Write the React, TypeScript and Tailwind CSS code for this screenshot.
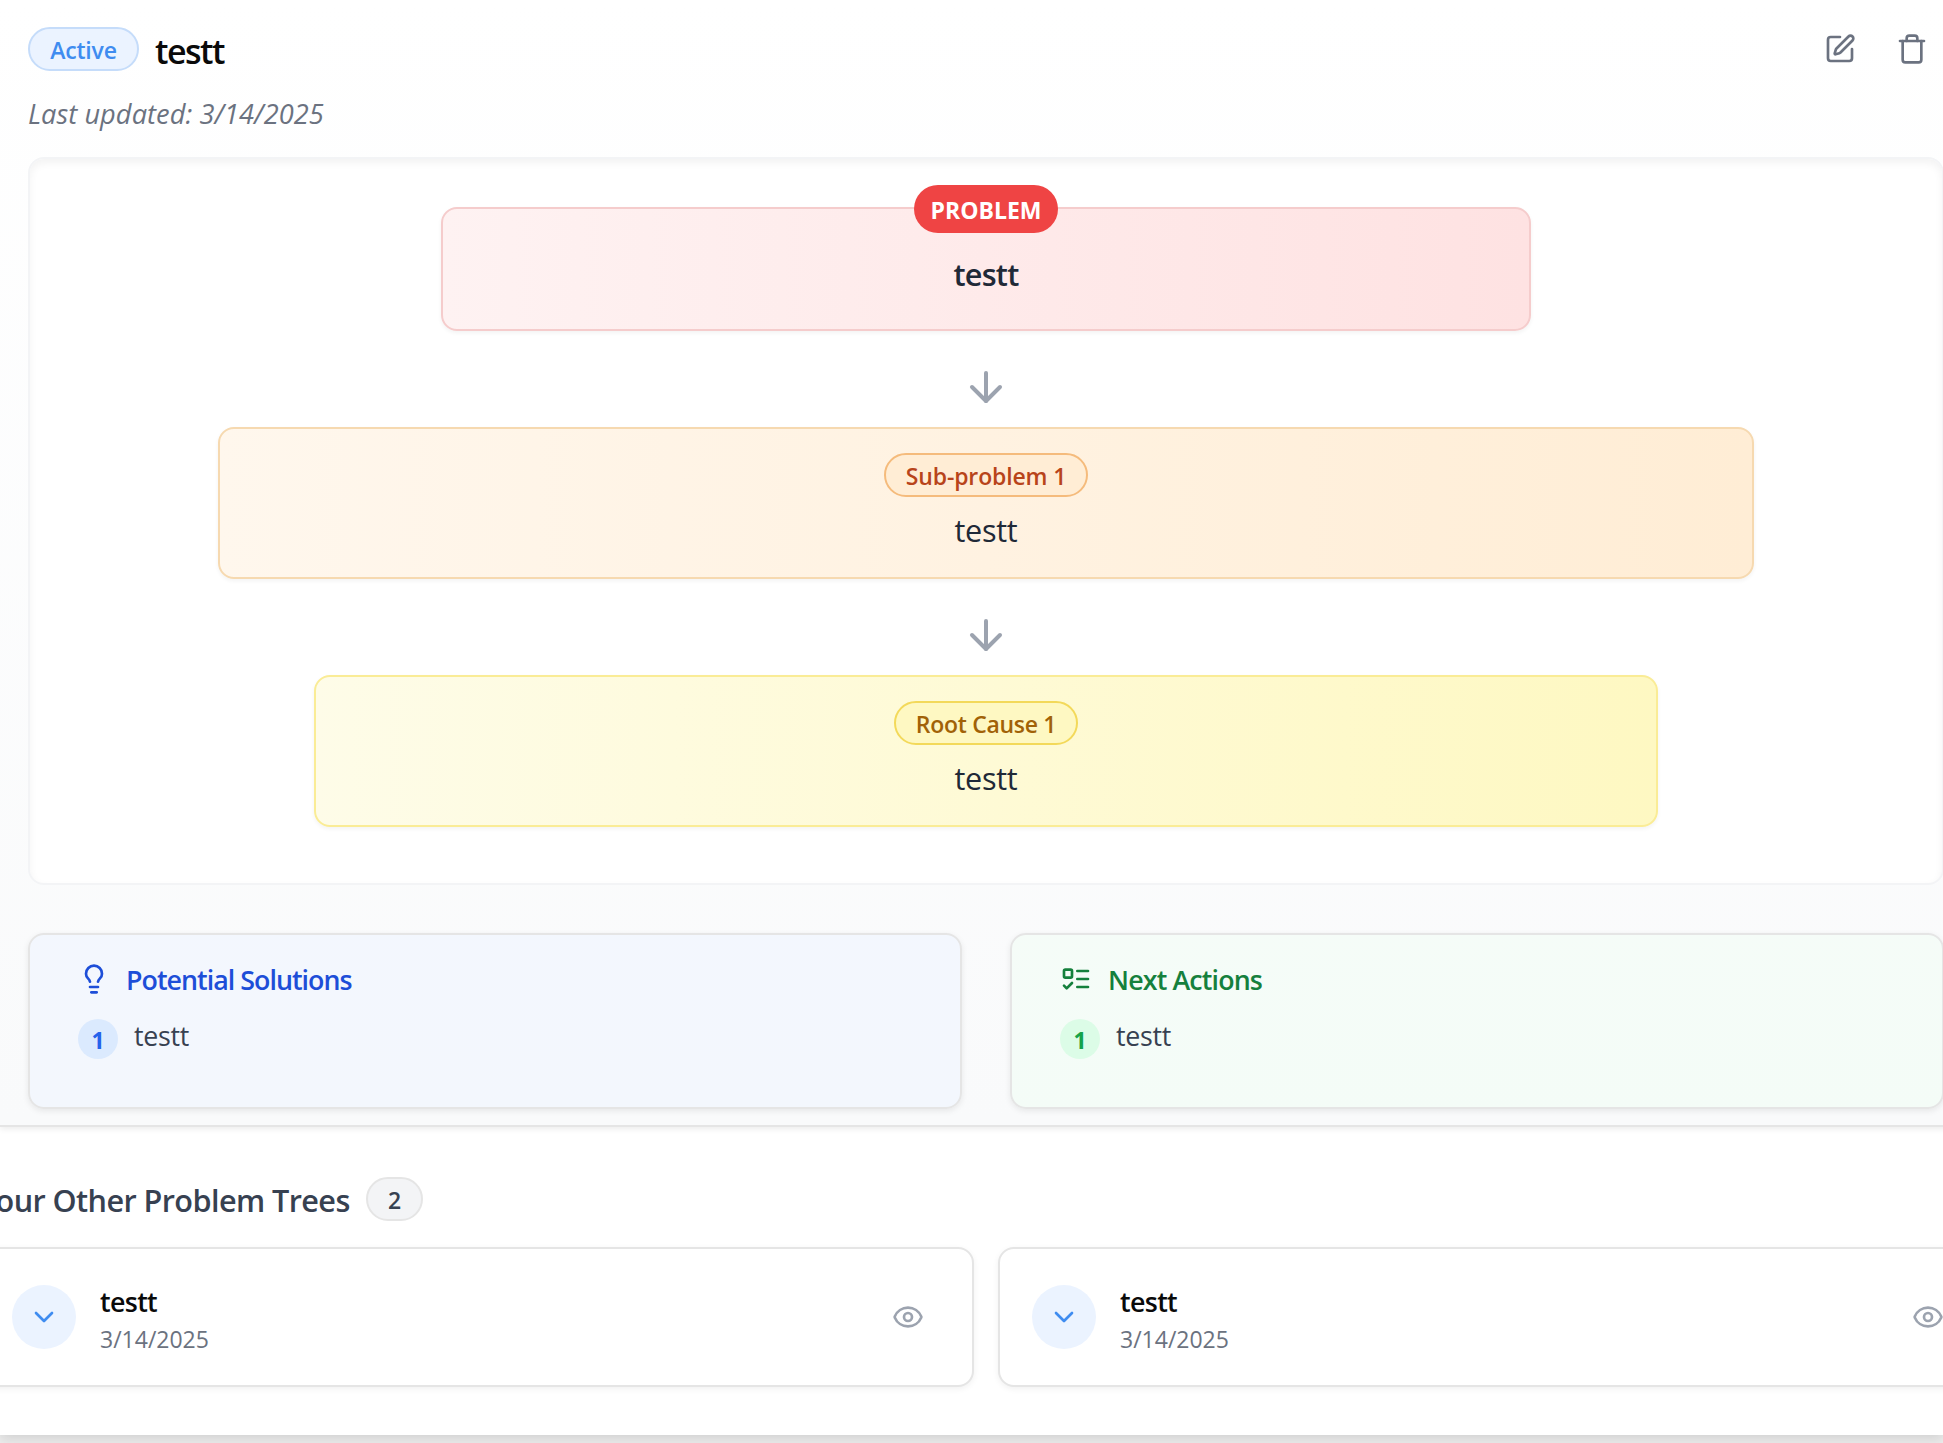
import React from "react";

function Icon({ className, children }: { className: string; children: React.ReactNode }) {
  return (
    <svg
      viewBox="0 0 24 24"
      fill="none"
      stroke="currentColor"
      strokeWidth={2}
      strokeLinecap="round"
      strokeLinejoin="round"
      className={"shrink-0 " + className}
    >
      {children}
    </svg>
  );
}

function DownArrow() {
  return (
    <div className="flex h-24 items-center justify-center pt-4">
      <Icon className="size-12 text-[#9ca3af]">
        <path d="M12 5v14" />
        <path d="m19 12-7 7-7-7" />
      </Icon>
    </div>
  );
}

function TreeNode({ label, text, box, badge }: { label: string; text: string; box: string; badge: string }) {
  return (
    <div
      className={
        "flex h-[152px] flex-col items-center rounded-2xl border-2 bg-gradient-to-r pt-6 shadow-[0_2px_4px_rgba(0,0,0,0.05)] " +
        box
      }
    >
      <span
        className={
          "flex h-11 items-center justify-center rounded-full border-2 pt-[2px] text-[23px] font-semibold leading-none " +
          badge
        }
      >
        {label}
      </span>
      <p className="mt-[13px] text-[30.6px] leading-10 tracking-[-0.3px] text-[#1f2937]">{text}</p>
    </div>
  );
}

function ListCard({
  title,
  icon,
  box,
  heading,
  bullet,
}: {
  title: string;
  icon: React.ReactNode;
  box: string;
  heading: string;
  bullet: string;
}) {
  return (
    <section
      className={
        "h-[176px] w-[934px] rounded-2xl border-2 border-[#e5e5e5] px-12 pt-7 shadow-[0_2px_6px_rgba(0,0,0,0.08)] " + box
      }
    >
      <h3 className={"flex h-8 items-center gap-4 text-[26.8px] font-semibold " + heading}>
        {icon}
        <span className="pt-[2px]">{title}</span>
      </h3>
      <div className="mt-6 flex items-start gap-4">
        <span
          className={"flex size-10 items-center justify-center rounded-full pt-[2px] text-[23px] font-bold leading-none " + bullet}
        >
          1
        </span>
        <p className="mt-[-3px] text-[26.8px] leading-10 tracking-[-0.3px] text-[#374151]">testt</p>
      </div>
    </section>
  );
}

function OtherTree() {
  return (
    <article className="flex h-[140px] w-[996px] shrink-0 items-center justify-between rounded-2xl border-2 border-[#e5e5e5] bg-white pl-8 pr-[48px] shadow-[0_2px_6px_rgba(0,0,0,0.06)]">
      <div className="flex items-center gap-6">
        <span className="flex size-16 items-center justify-center rounded-full bg-[#ebf3ff]">
          <Icon className="size-8 text-[#3f8cf0]">
            <path d="m6 9 6 6 6-6" />
          </Icon>
        </span>
        <div className="pt-[5px]">
          <h4 className="text-[26.8px] font-semibold leading-[38px] tracking-[-0.65px] text-[#0a0a0a]">testt</h4>
          <p className="text-[23px] leading-9 text-[#6b7280]">3/14/2025</p>
        </div>
      </div>
      <Icon className="size-8 text-[#9ca3af]">
        <path d="M2.062 12.348a1 1 0 0 1 0-.696 10.75 10.75 0 0 1 19.876 0 1 1 0 0 1 0 .696 10.75 10.75 0 0 1-19.876 0" />
        <circle cx="12" cy="12" r="3" />
      </Icon>
    </article>
  );
}

export default function App() {
  return (
    <div className="h-[1443px] w-[1943px] overflow-hidden bg-[#ededed] font-['Open_Sans',sans-serif]">
      <div className="h-[1435px] bg-white shadow-[0_4px_12px_rgba(0,0,0,0.12)]">
        <main className="h-[1127px] w-[1972px] border-b-2 border-[#e5e5e5] bg-gradient-to-b from-white to-[#f9fafb] pl-7 pt-[27px] shadow-[0_2px_6px_rgba(0,0,0,0.08)]">
          <header className="flex h-11 w-[1916px] items-center justify-between">
            <div className="flex items-center">
              <span className="flex h-11 w-[111px] items-center justify-center rounded-full border-2 border-[#c5dcfa] bg-[#ebf3ff] pt-[2px] text-[23px] font-semibold leading-none tracking-[-0.2px] text-[#3f8cf0]">
                Active
              </span>
              <h1 className="ml-4 pt-1 text-[34px] font-semibold leading-10 tracking-[-1.5px] text-[#0a0a0a]">testt</h1>
            </div>
            <div className="flex gap-10 pr-4 text-[#6b7280]">
              <Icon className="size-8">
                <path d="M12 3H5a2 2 0 0 0-2 2v14a2 2 0 0 0 2 2h14a2 2 0 0 0 2-2v-7" />
                <path d="M18.375 2.625a1 1 0 0 1 3 3l-9.013 9.014a2 2 0 0 1-.853.505l-2.873.84a.5.5 0 0 1-.62-.62l.84-2.873a2 2 0 0 1 .506-.852z" />
              </Icon>
              <Icon className="size-8">
                <path d="M3 6h18" />
                <path d="M19 6v14a2 2 0 0 1-2 2H7a2 2 0 0 1-2-2V6" />
                <path d="M8 6V4a2 2 0 0 1 2-2h4a2 2 0 0 1 2 2v2" />
              </Icon>
            </div>
          </header>
          <p className="mt-[22px] text-[27.2px] italic leading-[41px] tracking-[0.05px] text-[#6b7280]">
            Last updated: 3/14/2025
          </p>

          <section className="mt-[23px] flex h-[728px] w-[1916px] flex-col items-center rounded-2xl border-2 border-[#f3f4f6] bg-white pt-12 shadow-[inset_0_4px_8px_rgba(0,0,0,0.05)]">
            <div className="relative h-[124px] w-[1090px] rounded-2xl border-2 border-[#f5cccc] bg-gradient-to-r from-[#fef2f2] to-[#fee2e2] pt-[45px] text-center shadow-[0_2px_4px_rgba(0,0,0,0.05)]">
              <span className="absolute left-[471px] top-[-24px] flex h-12 w-[144px] items-center justify-center rounded-full bg-[#ef4444] pt-[2px] text-[23px] font-bold leading-none text-white">
                PROBLEM
              </span>
              <p className="text-[30.6px] font-semibold leading-10 tracking-[-0.75px] text-[#1f2937]">testt</p>
            </div>
            <DownArrow />
            <TreeNode
              label="Sub-problem 1"
              text="testt"
              box="w-[1536px] border-[#f6d9b0] from-[#fff7ed] to-[#ffedd5]"
              badge="w-[204px] border-[#f5bb7c] bg-[#ffedd5] tracking-[-0.15px] text-[#b8441a]"
            />
            <DownArrow />
            <TreeNode
              label="Root Cause 1"
              text="testt"
              box="w-[1344px] border-[#faec96] from-[#fefce8] to-[#fef8c2]"
              badge="w-[184px] border-[#f3d95a] bg-[#fef8c2] tracking-[-0.3px] text-[#a16207]"
            />
          </section>

          <div className="mt-12 flex w-[1916px] justify-between">
            <ListCard
              title="Potential Solutions"
              box="bg-[#eff5ff]/60"
              heading="tracking-[-0.97px] text-[#1d4ed8]"
              bullet="bg-[#dbeafe] text-[#2563eb]"
              icon={
                <Icon className="size-8">
                  <path d="M15 14c.2-1 .7-1.7 1.5-2.5 1-.9 1.5-2.2 1.5-3.5A6 6 0 0 0 6 8c0 1 .2 2.2 1.5 3.5.7.7 1.3 1.5 1.5 2.5" />
                  <path d="M9 18h6" />
                  <path d="M10 22h4" />
                </Icon>
              }
            />
            <ListCard
              title="Next Actions"
              box="bg-[#f0fdf4]/50"
              heading="tracking-[-0.85px] text-[#15803d]"
              bullet="bg-[#dcfce7] text-[#16a34a]"
              icon={
                <Icon className="size-8">
                  <rect x="3" y="5" width="6" height="6" rx="1" />
                  <path d="m3 17 2 2 4-4" />
                  <path d="M13 6h8" />
                  <path d="M13 12h8" />
                  <path d="M13 18h8" />
                </Icon>
              }
            />
          </div>
        </main>

        <section className="ml-[-22px] w-[2016px] pt-[50px]">
          <div className="flex h-11 items-center">
            <h2 className="w-[372px] whitespace-nowrap pt-[2px] text-[30.6px] font-semibold leading-10 tracking-[-0.57px] text-[#374151]">
              Your Other Problem Trees
            </h2>
            <span className="ml-4 flex h-11 w-[57px] items-center justify-center rounded-full border-2 border-[#e5e5e5] bg-[#f3f4f6] pt-[2px] text-[23px] font-semibold leading-none text-[#374151]">
              2
            </span>
          </div>
          <div className="mt-[26px] flex gap-6">
            <OtherTree />
            <OtherTree />
          </div>
        </section>
      </div>
    </div>
  );
}
